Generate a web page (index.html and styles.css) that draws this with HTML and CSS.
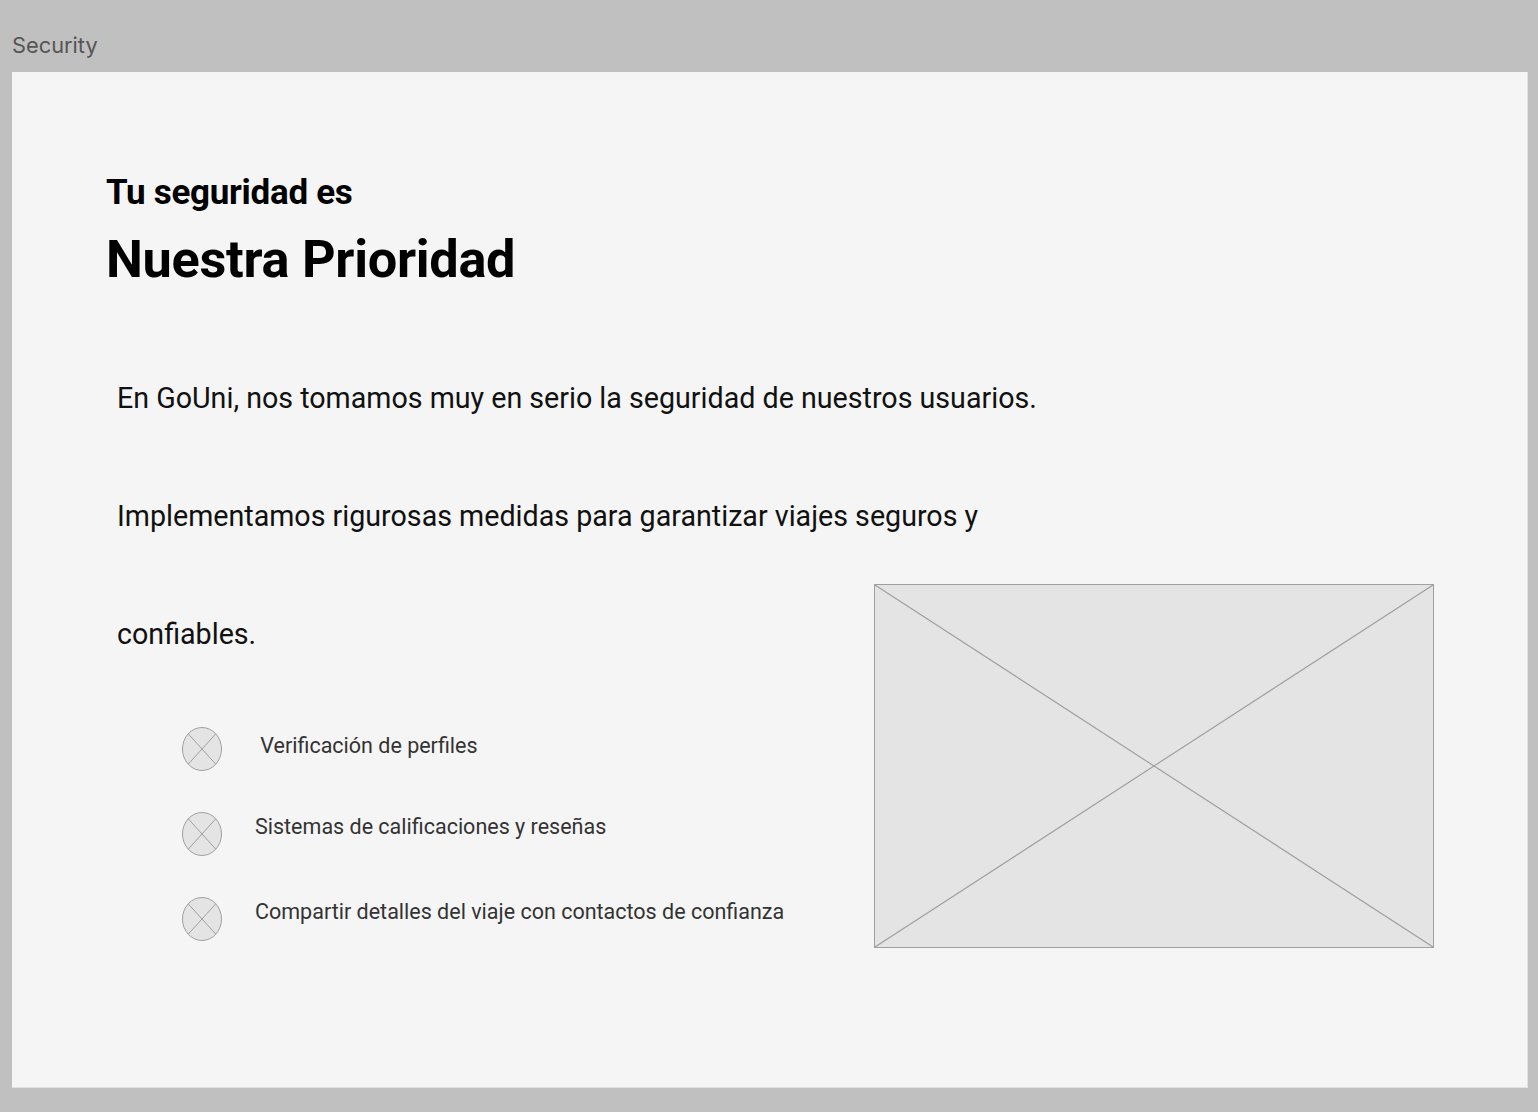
FILE: index.html
```html
<!DOCTYPE html>
<html lang="es">
<head>
<meta charset="utf-8">
<title>Security</title>
<link rel="stylesheet" href="styles.css">
</head>
<body>
<div class="label">Security</div>
<main class="frame">
  <header class="hero">
    <h2 class="kicker">Tu seguridad es</h2>
    <h1 class="title">Nuestra Prioridad</h1>
  </header>
  <section class="content">
    <div class="left">
      <p class="lead">En GoUni, nos tomamos muy en serio la seguridad de nuestros usuarios.<br>Implementamos rigurosas medidas para garantizar viajes seguros y<br>confiables.</p>
      <ul class="features">
        <li class="feature">
          <svg class="icon" viewBox="0 0 40 44" aria-hidden="true"><ellipse cx="20" cy="22" rx="19.5" ry="21.5" fill="#e4e4e4" stroke="#a0a0a0" stroke-width="1"/><line x1="6.2" y1="6.8" x2="33.8" y2="37.2" stroke="#a0a0a0"/><line x1="33.8" y1="6.8" x2="6.2" y2="37.2" stroke="#a0a0a0"/></svg>
          <span class="ftext ftext-first">&nbsp;Verificación de perfiles</span>
        </li>
        <li class="feature">
          <svg class="icon" viewBox="0 0 40 44" aria-hidden="true"><ellipse cx="20" cy="22" rx="19.5" ry="21.5" fill="#e4e4e4" stroke="#a0a0a0" stroke-width="1"/><line x1="6.2" y1="6.8" x2="33.8" y2="37.2" stroke="#a0a0a0"/><line x1="33.8" y1="6.8" x2="6.2" y2="37.2" stroke="#a0a0a0"/></svg>
          <span class="ftext">Sistemas de calificaciones y reseñas</span>
        </li>
        <li class="feature">
          <svg class="icon" viewBox="0 0 40 44" aria-hidden="true"><ellipse cx="20" cy="22" rx="19.5" ry="21.5" fill="#e4e4e4" stroke="#a0a0a0" stroke-width="1"/><line x1="6.2" y1="6.8" x2="33.8" y2="37.2" stroke="#a0a0a0"/><line x1="33.8" y1="6.8" x2="6.2" y2="37.2" stroke="#a0a0a0"/></svg>
          <span class="ftext">Compartir detalles del viaje con contactos de confianza</span>
        </li>
      </ul>
    </div>
    <div class="placeholder">
      <svg viewBox="0 0 560 364" preserveAspectRatio="none" aria-hidden="true"><line x1="0" y1="0" x2="560" y2="364" stroke="#a0a0a0" stroke-width="1.2"/><line x1="560" y1="0" x2="0" y2="364" stroke="#a0a0a0" stroke-width="1.2"/></svg>
    </div>
  </section>
</main>
</body>
</html>
```
FILE: styles.css
```css
* { box-sizing: border-box; }
html, body { margin: 0; padding: 0; }
body {
  background: #c0c0c0;
  font-family: Roboto, "Liberation Sans", sans-serif;
  width: 1538px;
  height: 1112px;
  overflow: hidden;
}
.label {
  height: 72px;
  padding: 31px 0 0 12px;
  font-family: Inter, "Noto Sans", sans-serif;
  font-size: 21.8px;
  line-height: 28px;
  color: #555555;
}
.frame {
  margin-left: 12px;
  width: 1516px;
  height: 1016px;
  background: #f5f5f5;
  border-right: 1px solid #e2e2e2;
  border-bottom: 1px solid #e2e2e2;
  padding: 97px 0 0 94px;
}
.hero { margin: 0; }
.kicker {
  margin: 0;
  font-size: 35px;
  font-weight: 700;
  line-height: 48px;
  color: #000;
  letter-spacing: -0.3px;
}
.title {
  margin: 10px 0 0;
  font-size: 52.3px;
  font-weight: 700;
  line-height: 64px;
  color: #000;
  letter-spacing: -0.3px;
}
.content {
  display: flex;
  align-items: flex-start;
  margin-top: 48px;
}
.left {
  width: 768px;
  flex: none;
}
.lead {
  margin: 0 0 0 11px;
  font-size: 28.65px;
  line-height: 118px;
  color: #111;
  white-space: nowrap;
}
.features {
  list-style: none;
  margin: 34px 0 0 76px;
  padding: 0;
  display: flex;
  flex-direction: column;
  gap: 41px;
}
.feature {
  display: flex;
  align-items: center;
  gap: 33px;
  height: 44px;
}
.icon { width: 40px; height: 44px; flex: none; }
.ftext {
  font-size: 21.5px;
  line-height: 24px;
  color: #333;
  margin-top: -14px;
}
.ftext-first { margin-top: -6px; }
.placeholder {
  margin-top: 245px;
  width: 560px;
  height: 364px;
  background: #e4e4e4;
  border: 1.5px solid #a0a0a0;
  flex: none;
}
.placeholder svg { display: block; width: 100%; height: 100%; }
```
